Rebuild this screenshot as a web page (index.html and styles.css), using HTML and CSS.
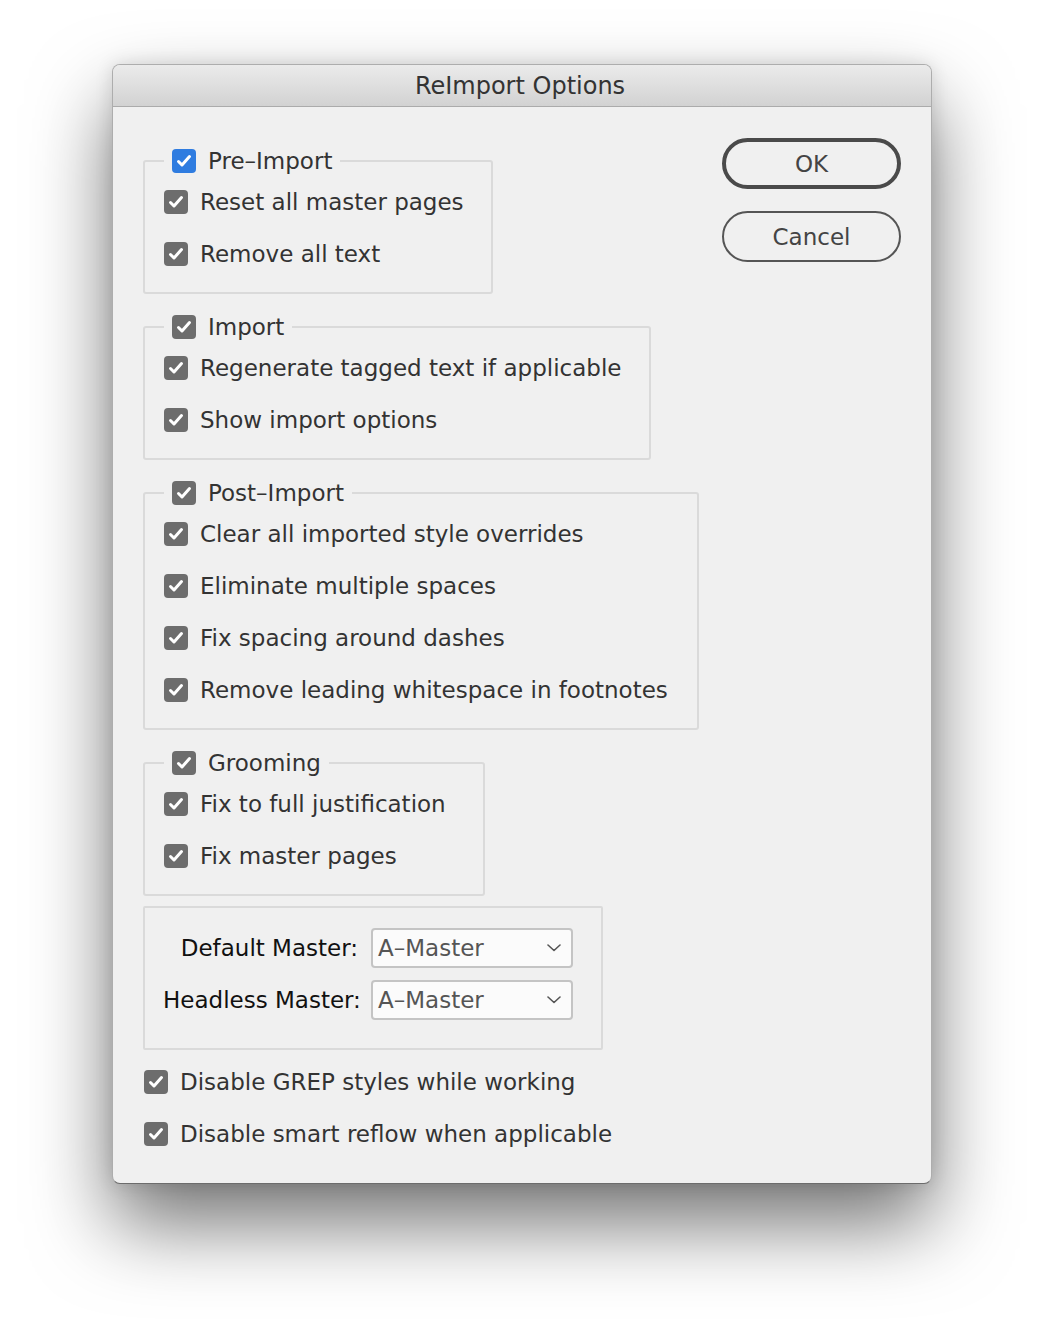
FILE: index.html
```html
<!DOCTYPE html>
<html>
<head>
<meta charset="utf-8">
<link rel="stylesheet" href="styles.css">
</head>
<body>
<div class="window">
  <div class="titlebar">ReImport Options</div>
  <div class="content">
    <div class="leftcol">
      <fieldset class="group g-pre">
        <legend><span class="cb blue"><svg viewBox="0 0 24 24"><polyline points="6.5,12.5 10,16 17.5,7.5"/></svg></span><span>Pre–Import</span></legend>
        <div class="row"><span class="cb"><svg viewBox="0 0 24 24"><polyline points="6.5,12.5 10,16 17.5,7.5"/></svg></span><span>Reset all master pages</span></div>
        <div class="row"><span class="cb"><svg viewBox="0 0 24 24"><polyline points="6.5,12.5 10,16 17.5,7.5"/></svg></span><span>Remove all text</span></div>
      </fieldset>
      <fieldset class="group g-imp">
        <legend><span class="cb"><svg viewBox="0 0 24 24"><polyline points="6.5,12.5 10,16 17.5,7.5"/></svg></span><span>Import</span></legend>
        <div class="row"><span class="cb"><svg viewBox="0 0 24 24"><polyline points="6.5,12.5 10,16 17.5,7.5"/></svg></span><span>Regenerate tagged text if applicable</span></div>
        <div class="row"><span class="cb"><svg viewBox="0 0 24 24"><polyline points="6.5,12.5 10,16 17.5,7.5"/></svg></span><span>Show import options</span></div>
      </fieldset>
      <fieldset class="group g-post">
        <legend><span class="cb"><svg viewBox="0 0 24 24"><polyline points="6.5,12.5 10,16 17.5,7.5"/></svg></span><span>Post–Import</span></legend>
        <div class="row"><span class="cb"><svg viewBox="0 0 24 24"><polyline points="6.5,12.5 10,16 17.5,7.5"/></svg></span><span>Clear all imported style overrides</span></div>
        <div class="row"><span class="cb"><svg viewBox="0 0 24 24"><polyline points="6.5,12.5 10,16 17.5,7.5"/></svg></span><span>Eliminate multiple spaces</span></div>
        <div class="row"><span class="cb"><svg viewBox="0 0 24 24"><polyline points="6.5,12.5 10,16 17.5,7.5"/></svg></span><span>Fix spacing around dashes</span></div>
        <div class="row"><span class="cb"><svg viewBox="0 0 24 24"><polyline points="6.5,12.5 10,16 17.5,7.5"/></svg></span><span>Remove leading whitespace in footnotes</span></div>
      </fieldset>
      <fieldset class="group g-groom">
        <legend><span class="cb"><svg viewBox="0 0 24 24"><polyline points="6.5,12.5 10,16 17.5,7.5"/></svg></span><span>Grooming</span></legend>
        <div class="row"><span class="cb"><svg viewBox="0 0 24 24"><polyline points="6.5,12.5 10,16 17.5,7.5"/></svg></span><span>Fix to full justification</span></div>
        <div class="row"><span class="cb"><svg viewBox="0 0 24 24"><polyline points="6.5,12.5 10,16 17.5,7.5"/></svg></span><span>Fix master pages</span></div>
      </fieldset>
      <div class="masters">
        <label class="mlabel">Default Master:</label>
        <div class="select"><span>A–Master</span><svg viewBox="0 0 14 8"><polyline points="1,1 7,6.5 13,1"/></svg></div>
        <label class="mlabel">Headless Master:</label>
        <div class="select"><span>A–Master</span><svg viewBox="0 0 14 8"><polyline points="1,1 7,6.5 13,1"/></svg></div>
      </div>
      <div class="extras">
        <div class="row"><span class="cb"><svg viewBox="0 0 24 24"><polyline points="6.5,12.5 10,16 17.5,7.5"/></svg></span><span>Disable GREP styles while working</span></div>
        <div class="row"><span class="cb"><svg viewBox="0 0 24 24"><polyline points="6.5,12.5 10,16 17.5,7.5"/></svg></span><span>Disable smart reflow when applicable</span></div>
      </div>
    </div>
    <div class="rightcol">
      <button class="btn btn-ok">OK</button>
      <button class="btn btn-cancel">Cancel</button>
    </div>
  </div>
</div>
</body>
</html>
```
FILE: styles.css
```css
html, body {
  margin: 0;
  padding: 0;
  background: #ffffff;
}
body {
  padding: 64px 0 160px 112px;
  min-height: 1344px;
  box-sizing: border-box;
  font-family: "DejaVu Sans", sans-serif;
  font-size: 23px;
  color: #333333;
}
.window {
  width: 820px;
  height: 1120px;
  box-sizing: border-box;
  border: 1px solid rgba(0, 0, 0, 0.28);
  border-bottom-color: rgba(0, 0, 0, 0.55);
  border-radius: 8px;
  background: #f0f0f0;
  box-shadow: 0 40px 80px rgba(0, 0, 0, 0.55), 0 0 18px rgba(0, 0, 0, 0.12);
  overflow: hidden;
  display: flex;
  flex-direction: column;
}
.titlebar {
  height: 42px;
  flex: none;
  box-sizing: border-box;
  border-bottom: 1px solid #ababab;
  background: linear-gradient(#ebebeb, #d2d2d2);
  text-align: center;
  line-height: 43px;
  font-size: 24px;
  color: #333;
  padding-right: 4px;
}
.content {
  flex: 1;
  display: flex;
  justify-content: space-between;
  padding: 31px 30px 0 30px;
}
.leftcol {
  display: flex;
  flex-direction: column;
  align-items: flex-start;
  padding-top: 10px;
}
.group {
  margin: 0 0 20px 0;
  border: 2px solid #dadada;
  border-radius: 3px;
  padding: 2px 0 12px 19px;
  box-sizing: border-box;
}
.g-pre { width: 350px; }
.g-imp { width: 508px; }
.g-post { width: 556px; }
.g-groom { width: 342px; margin-bottom: 10px; }
legend {
  padding: 0 8px;
  height: 26px;
  display: flex;
  align-items: center;
  gap: 12px;
  line-height: 26px;
}
.row {
  height: 52px;
  display: flex;
  align-items: center;
  gap: 12px;
  white-space: nowrap;
}
.cb {
  width: 24px;
  height: 24px;
  border-radius: 4px;
  background: #6d6d6d;
  flex: none;
  display: block;
}
.cb.blue {
  background: #2f7ce0;
}
.cb svg {
  width: 24px;
  height: 24px;
  display: block;
}
.cb polyline {
  fill: none;
  stroke: #ffffff;
  stroke-width: 3;
  stroke-linecap: round;
  stroke-linejoin: round;
}
.masters {
  width: 460px;
  box-sizing: border-box;
  border: 2px solid #dadada;
  border-radius: 2px;
  padding: 20px 28px 28px 18px;
  display: grid;
  grid-template-columns: 195px 202px;
  column-gap: 13px;
  row-gap: 12px;
  align-items: center;
}
.mlabel {
  text-align: right;
  color: #111;
  white-space: nowrap;
}
.select {
  height: 40px;
  box-sizing: border-box;
  border: 2px solid #c4c4c4;
  border-radius: 4px;
  background: #fbfbfb;
  display: flex;
  align-items: center;
  justify-content: space-between;
  padding: 0 6px 0 5px;
  color: #555;
}
.select svg {
  width: 14px;
  height: 8px;
  margin-right: 4px;
}
.select polyline {
  fill: none;
  stroke: #555;
  stroke-width: 1.6;
  stroke-linecap: round;
  stroke-linejoin: round;
}
.extras {
  margin-top: 6px;
  padding-left: 1px;
}
.rightcol {
  display: flex;
  flex-direction: column;
  gap: 22px;
}
.btn {
  width: 179px;
  height: 51px;
  box-sizing: border-box;
  border-radius: 26px;
  background: #f0f0f0;
  font-family: "DejaVu Sans", sans-serif;
  font-size: 23px;
  color: #444;
  padding: 0;
  margin: 0;
}
.btn-ok {
  border: 4px solid #4a4a4a;
}
.btn-cancel {
  border: 2px solid #555;
}
```
